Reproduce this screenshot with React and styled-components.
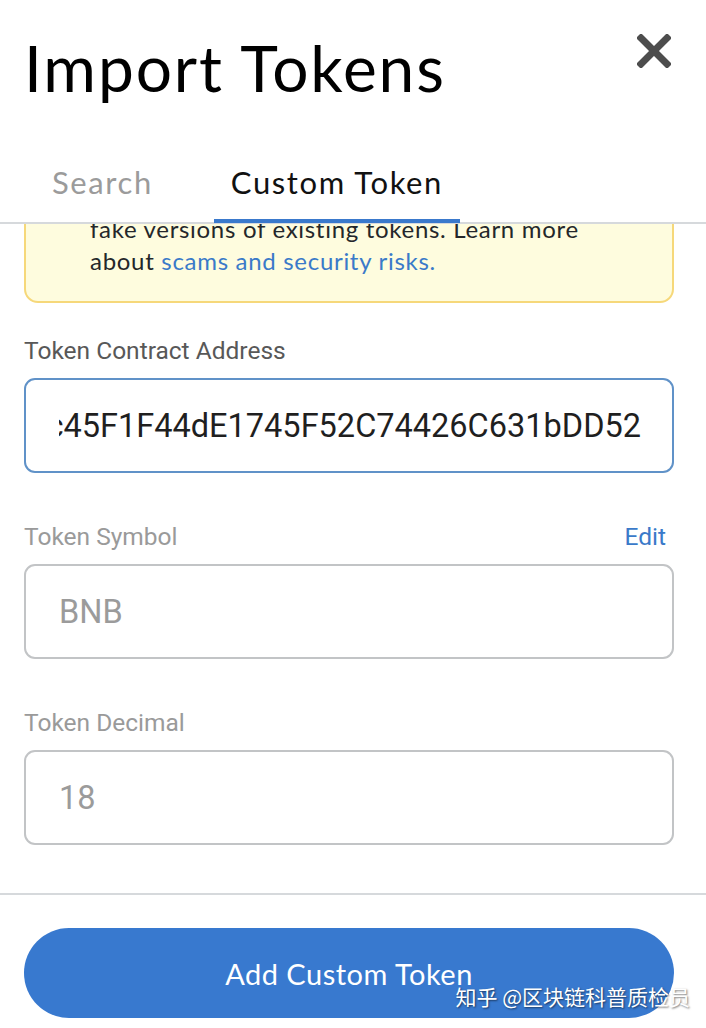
import React, { useLayoutEffect, useRef } from 'react';
import styled, { createGlobalStyle } from 'styled-components';

const GlobalStyle = createGlobalStyle`
  html, body {
    margin: 0;
    padding: 0;
    background: #fff;
  }
  * { box-sizing: border-box; }
`;

const Screen = styled.div`
  position: relative;
  width: 706px;
  height: 1028px;
  display: flex;
  flex-direction: column;
  overflow: hidden;
  background: #fff;
  font-family: Lato, "Noto Sans", sans-serif;
`;

const Header = styled.header`
  display: flex;
  align-items: flex-start;
  justify-content: space-between;
  padding: 28px 32px 0 24px;
`;

const Title = styled.h1`
  margin: 0;
  font-size: 64px;
  line-height: 80px;
  font-weight: 400;
  letter-spacing: 1.9px;
  color: #000;
`;

const CloseButton = styled.button`
  border: 0;
  background: none;
  padding: 0;
  margin-top: 3px;
  width: 40px;
  height: 40px;
  display: flex;
  align-items: center;
  justify-content: center;
`;

const TabList = styled.nav`
  display: flex;
  gap: 44px;
  padding-left: 35px;
  margin-top: 42px;
  border-bottom: 2px solid #d6d9dc;
`;

const Tab = styled.div`
  padding: 0 17px 5px;
  height: 73px;
  display: flex;
  align-items: center;
  font-size: 31px;
  letter-spacing: 1.6px;
  color: ${p => (p.$active ? '#111' : '#9b9b9b')};
  border-bottom: 4px solid ${p => (p.$active ? '#3a79cc' : 'transparent')};
  margin-bottom: -1px;
`;

const Body = styled.div`
  flex: 1;
  overflow: hidden;
  padding: 0 32px 0 24px;
`;

const Banner = styled.div`
  margin-top: 16px;
  display: flex;
  gap: 20px;
  padding: 20px 20px 24px 16px;
  background: #fefcde;
  border: 2px solid #f6d87a;
  border-radius: 14px;
`;

const BannerText = styled.p`
  margin: 0;
  font-size: 24px;
  line-height: 32px;
  letter-spacing: 0.7px;
  color: #24272a;
`;

const Link = styled.a`
  color: #3a7ac9;
  text-decoration: none;
`;

const Field = styled.div`
  margin-top: ${p => p.$top}px;
`;

const LabelRow = styled.div`
  display: flex;
  justify-content: space-between;
  align-items: center;
  height: 30px;
  margin-bottom: 13px;
`;

const Label = styled.label`
  font-family: Roboto, sans-serif;
  font-size: 24.5px;
  color: ${p => (p.$muted ? '#9a9a9a' : '#585858')};
`;

const EditLink = styled.span`
  font-family: Roboto, sans-serif;
  font-size: 24.5px;
  color: #3a7ac9;
  margin-right: 8px;
`;

const InputBox = styled.div`
  height: 95px;
  border: 2px solid ${p => (p.$focused ? '#6092c8' : '#c2c4c6')};
  border-radius: 11px;
  padding: 0 31px 0 33px;
  display: flex;
  align-items: center;
`;

const InputValue = styled.div`
  flex: 1;
  display: flex;
  justify-content: flex-end;
  overflow: hidden;
  white-space: nowrap;
  font-family: Roboto, sans-serif;
  font-size: 32.5px;
  color: #1f1f1f;
  ${p => p.$muted && `
    justify-content: flex-start;
    color: #9b9b9b;
  `}
`;

const Footer = styled.footer`
  border-top: 2px solid #d6d9dc;
  padding: 33px 32px 10px 24px;
`;

const PrimaryButton = styled.button`
  width: 100%;
  height: 90px;
  border: 0;
  border-radius: 45px;
  background: #3879cf;
  color: #fff;
  font-family: Lato, "Noto Sans", sans-serif;
  font-size: 29px;
  letter-spacing: 0.5px;
`;

const Watermark = styled.div`
  position: absolute;
  right: 16px;
  bottom: 17px;
  font-family: "Noto Sans CJK SC", sans-serif;
  font-size: 21px;
  color: #fff;
  text-shadow: 1px 1px 2px rgba(0, 0, 0, 0.55);
`;

const CloseIcon = () => (
  <svg width="34" height="34" viewBox="0 0 34 34">
    <path d="M4 4 L30 30 M30 4 L4 30" stroke="#4d4d4d" strokeWidth="7" strokeLinecap="square" />
  </svg>
);

const WarnIcon = () => (
  <svg width="28" height="28" viewBox="0 0 28 28" style={{ flexShrink: 0, marginTop: 2 }}>
    <circle cx="14" cy="14" r="12" fill="none" stroke="#f0b429" strokeWidth="2.5" />
    <path d="M14 7 V16 M14 19.5 V21" stroke="#f0b429" strokeWidth="2.5" strokeLinecap="round" />
  </svg>
);

export default function App() {
  const body = useRef(null);

  useLayoutEffect(() => {
    // the form is scrolled so the banner's first line sits under the tabs
    if (body.current) body.current.scrollTop = 81;
  }, []);

  return (
    <Screen>
      <GlobalStyle />
      <Header>
        <Title>Import Tokens</Title>
        <CloseButton aria-label="Close"><CloseIcon /></CloseButton>
      </Header>

      <TabList>
        <Tab>Search</Tab>
        <Tab $active>Custom Token</Tab>
      </TabList>

      <Body ref={body}>
        <Banner>
          <WarnIcon />
          <BannerText>
            Anyone can create a token, including creating<br />
            fake versions of existing tokens. Learn more<br />
            about <Link href="#risks">scams and security risks.</Link>
          </BannerText>
        </Banner>

        <Field $top={32}>
          <LabelRow><Label>Token Contract Address</Label></LabelRow>
          <InputBox $focused>
            <InputValue>0x7130d2A12B9BCbFAe4f2634d864A1Ee1Ce3Ead9c45F1F44dE1745F52C74426C631bDD52</InputValue>
          </InputBox>
        </Field>

        <Field $top={48}>
          <LabelRow>
            <Label $muted>Token Symbol</Label>
            <EditLink>Edit</EditLink>
          </LabelRow>
          <InputBox>
            <InputValue $muted>BNB</InputValue>
          </InputBox>
        </Field>

        <Field $top={48}>
          <LabelRow><Label $muted>Token Decimal</Label></LabelRow>
          <InputBox>
            <InputValue $muted>18</InputValue>
          </InputBox>
        </Field>
        <div style={{ height: 200 }} />
      </Body>

      <Footer>
        <PrimaryButton>Add Custom Token</PrimaryButton>
      </Footer>

      <Watermark>知乎 @区块链科普质检员</Watermark>
    </Screen>
  );
}
